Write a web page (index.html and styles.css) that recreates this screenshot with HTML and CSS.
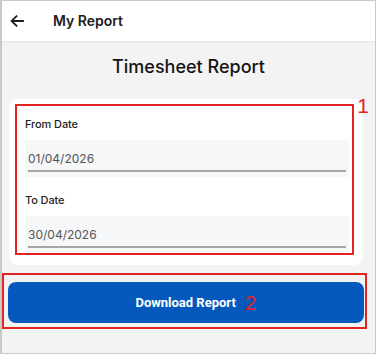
FILE: index.html
```html
<!DOCTYPE html>
<html>
<head>
<meta charset="utf-8">
<link rel="stylesheet" href="styles.css">
</head>
<body>
<div class="frame">
  <header class="topbar">
    <svg class="back" width="14" height="12" viewBox="0 0 14 12"><path d="M13 6H2M6.5 1.2L1.6 6l4.9 4.8" fill="none" stroke="#1a1a1a" stroke-width="1.8" stroke-linecap="square"/></svg>
    <span class="topbar-title">My Report</span>
  </header>
  <h1 class="page-title">Timesheet Report</h1>
  <div class="card">
    <div class="mark mark-one">
      <span class="mark-num num-one">1</span>
      <div class="field">
        <div class="label">From Date</div>
        <div class="input"><span>01/04/2026</span></div>
      </div>
      <div class="field field-second">
        <div class="label">To Date</div>
        <div class="input"><span>30/04/2026</span></div>
      </div>
    </div>
  </div>
  <div class="mark mark-two">
    <button class="btn">Download Report<span class="num-two">2</span></button>
  </div>
</div>
</body>
</html>
```
FILE: styles.css
```css
* { box-sizing: border-box; }
html, body { margin: 0; padding: 0; }
body { font-family: Inter, "Noto Sans", sans-serif; color: #1d1d1d; }
.frame {
  width: 376px;
  height: 354px;
  background: #f3f3f3;
  border: 1px solid #c9c9c9;
  border-left-width: 2px;
  overflow: hidden;
}
.topbar {
  height: 40px;
  background: #fff;
  display: flex;
  align-items: center;
  padding-left: 8px;
  box-shadow: 0 1px 2px rgba(0,0,0,0.08);
}
.back { display: block; margin-top: -1px; }
.topbar-title {
  margin-left: 29px;
  font-size: 14px;
  font-weight: 600;
  color: #202020;
  margin-top: -1px;
}
.page-title {
  margin: 14px 0 0;
  text-align: center;
  font-size: 18px;
  font-weight: 500;
  line-height: 24px;
  color: #151515;
}
.card {
  margin: 20px 12px 0 7px;
  background: #fff;
  border-radius: 9px;
  padding: 5px 9px 10px 6px;
  position: relative;
}
.mark {
  border: 2px solid #e32222;
  position: relative;
}
.mark-one {
  padding: 10px 3px 0 8px;
}
.mark-num, .num-two {
  color: #e32222;
  font-family: "Liberation Sans", Arial, sans-serif;
  font-size: 21px;
  font-weight: 400;
  line-height: 1;
}
.num-one {
  position: absolute;
  right: -17px;
  top: -11px;
}
.label {
  font-size: 11px;
  font-weight: 500;
  line-height: 16px;
  color: #1f1f1f;
  letter-spacing: -0.1px;
}
.field-second { margin-top: 15px; }
.input {
  margin-top: 8px;
  height: 37px;
  background: #f6f7f9;
  padding: 0 3px 0 3px;
  display: flex;
  flex-direction: column;
  justify-content: flex-end;
}
.input span {
  display: block;
  font-size: 12px;
  line-height: 16px;
  color: #555;
  padding: 0 0 3px 0;
  border-bottom: 2px solid #a6a6a6;
  margin-bottom: 5px;
}
.mark-two {
  margin: 8px 8px 0 0;
  padding: 7px 1px 4px 4px;
}
.btn {
  display: flex;
  align-items: center;
  justify-content: center;
  width: 100%;
  height: 41px;
  border: none;
  border-radius: 8px;
  background: #0559bc;
  color: #fff;
  font-family: Roboto, "Noto Sans", sans-serif;
  font-size: 13px;
  font-weight: 700;
  padding: 0 0 0 20px;
}
.num-two { margin-left: 9px; margin-top: -1px; }
```
